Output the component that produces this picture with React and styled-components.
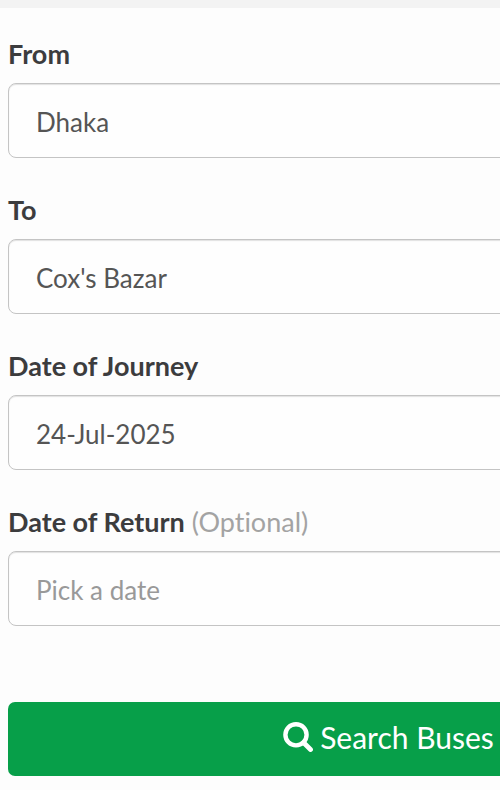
import React, { useState } from "react";
import styled, { createGlobalStyle } from "styled-components";

const GlobalStyle = createGlobalStyle`
  * {
    box-sizing: border-box;
  }
  body {
    margin: 0;
    background: #fdfdfd;
    color: #3c3c3e;
    font-family: Lato, "Noto Sans", sans-serif;
    font-variant-ligatures: none;
  }
`;
const Page = styled.main`
  overflow: hidden;
`;
const TopStrip = styled.div`
  height: 8px;
  background: #f3f3f3;
`;
// the form is wider than a phone screen and runs off its right side
const Form = styled.form`
  display: flex;
  flex-direction: column;
  gap: 37px;
  width: calc(100% + 277px);
  padding: 31px 8px 13px;
`;
const Field = styled.div`
  display: flex;
  flex-direction: column;
  gap: 14px;
`;
const Label = styled.label`
  font-size: 27px;
  font-weight: 700;
  line-height: 30px;
`;
const Optional = styled.span`
  color: #a3a3a3;
  font-weight: 400;
`;
const Input = styled.input`
  width: 100%;
  height: 75px;
  padding: 2px 27px 0;
  border: 1px solid #c4c4c4;
  border-radius: 8px;
  outline: none;
  background: #fefefe;
  box-shadow: inset 0 1px 1px #e2e2e2;
  color: #555;
  font-family: inherit;
  font-size: 26px;

  &::placeholder {
    color: #999;
    opacity: 1;
  }
`;
const SearchButton = styled.button`
  display: flex;
  align-items: center;
  justify-content: center;
  gap: 7px;
  height: 74px;
  margin-top: 39px;
  padding: 0 0 4px;
  border: none;
  border-radius: 7px;
  background: #079f49;
  color: #fff;
  font-family: inherit;
  font-size: 30px;
  cursor: pointer;
`;
const Icon = styled.svg`
  width: 30px;
  height: 30px;
`;

const SearchIcon = () => (
  <Icon viewBox="0 0 30 30" fill="none" stroke="currentColor" aria-hidden="true">
    <circle cx="13" cy="12.8" r="10.6" strokeWidth="4.4" />
    <path d="M20.5 20.5l7 7" strokeWidth="4.8" strokeLinecap="round" />
  </Icon>
);

const FormField = ({ id, label, optional, ...rest }) => (
  <Field>
    <Label htmlFor={id}>
      {label}
      {optional && <Optional> (Optional)</Optional>}
    </Label>
    <Input id={id} name={id} type="text" autoComplete="off" {...rest} />
  </Field>
);

const App = () => {
  const [search, setSearch] = useState({
    from: "Dhaka",
    to: "Cox's Bazar",
    journey: "24-Jul-2025",
    returning: "",
  });

  const handleChange = (e) => {
    setSearch({ ...search, [e.target.name]: e.target.value });
  };

  return (
    <Page>
      <GlobalStyle />
      <TopStrip />
      <Form onSubmit={(e) => e.preventDefault()}>
        <FormField id="from" label="From" value={search.from} onChange={handleChange} />
        <FormField id="to" label="To" value={search.to} onChange={handleChange} />
        <FormField
          id="journey"
          label="Date of Journey"
          value={search.journey}
          onChange={handleChange}
        />
        <FormField
          id="returning"
          label="Date of Return"
          optional
          placeholder="Pick a date"
          value={search.returning}
          onChange={handleChange}
        />
        <SearchButton type="submit">
          <SearchIcon />
          Search Buses
        </SearchButton>
      </Form>
    </Page>
  );
};
export default App;
